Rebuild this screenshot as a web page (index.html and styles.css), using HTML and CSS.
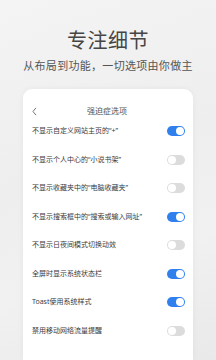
FILE: index.html
```html
<!DOCTYPE html>
<html lang="zh">
<head>
<meta charset="utf-8">
<link rel="stylesheet" href="styles.css">
</head>
<body>
<div class="page">
  <div class="hero">
    <div class="title">专注细节</div>
    <div class="subtitle">从布局到功能，一切选项由你做主</div>
  </div>
  <div class="card">
    <div class="header">
      <svg class="back" width="5" height="9" viewBox="0 0 5 9"><path d="M4 0.8 L1 4.5 L4 8.2" fill="none" stroke="#666" stroke-width="0.9"/></svg>
      <div class="htitle">强迫症选项</div>
    </div>
    <div class="row"><span class="label">不显示自定义网站主页的“+”</span><span class="sw on"></span></div>
    <div class="row"><span class="label">不显示个人中心的“小说书架”</span><span class="sw"></span></div>
    <div class="row"><span class="label">不显示收藏夹中的“电脑收藏夹”</span><span class="sw"></span></div>
    <div class="row"><span class="label">不显示搜索框中的“搜索或输入网址”</span><span class="sw on"></span></div>
    <div class="row"><span class="label">不显示日夜间模式切换动效</span><span class="sw"></span></div>
    <div class="row"><span class="label">全屏时显示系统状态栏</span><span class="sw on"></span></div>
    <div class="row"><span class="label">Toast使用系统样式</span><span class="sw on"></span></div>
    <div class="row"><span class="label">禁用移动网络流量提醒</span><span class="sw"></span></div>
  </div>
</div>
</body>
</html>
```

FILE: styles.css
```css
html, body {
  margin: 0;
  padding: 0;
}
body {
  width: 216px;
  height: 360px;
  overflow: hidden;
  font-family: "Noto Sans CJK SC", "Noto Sans", sans-serif;
  background: linear-gradient(160deg, #f4f4f4 0%, #eeeeee 45%, #f1f1f1 70%, #e9e9e9 100%);
}
.page {
  height: 360px;
  display: flex;
  flex-direction: column;
  align-items: center;
}
.hero {
  display: flex;
  flex-direction: column;
  align-items: center;
  padding-top: 28px;
}
.title {
  font-size: 20px;
  line-height: 24px;
  color: #454545;
  letter-spacing: 0.5px;
}
.subtitle {
  margin-top: 6px;
  font-size: 11px;
  line-height: 14px;
  color: #555;
  letter-spacing: 0.3px;
}
.card {
  margin-top: 17px;
  width: 170px;
  flex: 1;
  min-height: 0;
  overflow: hidden;
  background: #fff;
  border-radius: 9px 9px 0 0;
  box-shadow: 0 0 6px rgba(0,0,0,0.05);
  display: flex;
  flex-direction: column;
}
.header {
  position: relative;
  margin-top: 16px;
  height: 12px;
  flex: none;
  display: flex;
  align-items: center;
  justify-content: center;
}
.back {
  position: absolute;
  left: 9px;
  top: 2px;
}
.htitle {
  font-size: 8px;
  line-height: 12px;
  color: #555;
  margin-left: -2px;
}
.row {
  height: 28.5px;
  flex: none;
  display: flex;
  align-items: center;
  justify-content: space-between;
  padding: 0 8.5px 0 9px;
}
.label {
  font-family: "Noto Sans", "Noto Sans CJK SC", sans-serif;
  font-size: 7px;
  line-height: 10px;
  color: #3a3a3a;
  white-space: nowrap;
}
.sw {
  position: relative;
  width: 18px;
  height: 10px;
  border-radius: 5px;
  background: #dcdcdc;
  flex: none;
}
.sw::after {
  content: "";
  position: absolute;
  top: 1px;
  left: 1px;
  width: 8px;
  height: 8px;
  border-radius: 50%;
  background: #fff;
}
.sw.on {
  background: #2f80ed;
}
.sw.on::after {
  left: 9px;
}
```
